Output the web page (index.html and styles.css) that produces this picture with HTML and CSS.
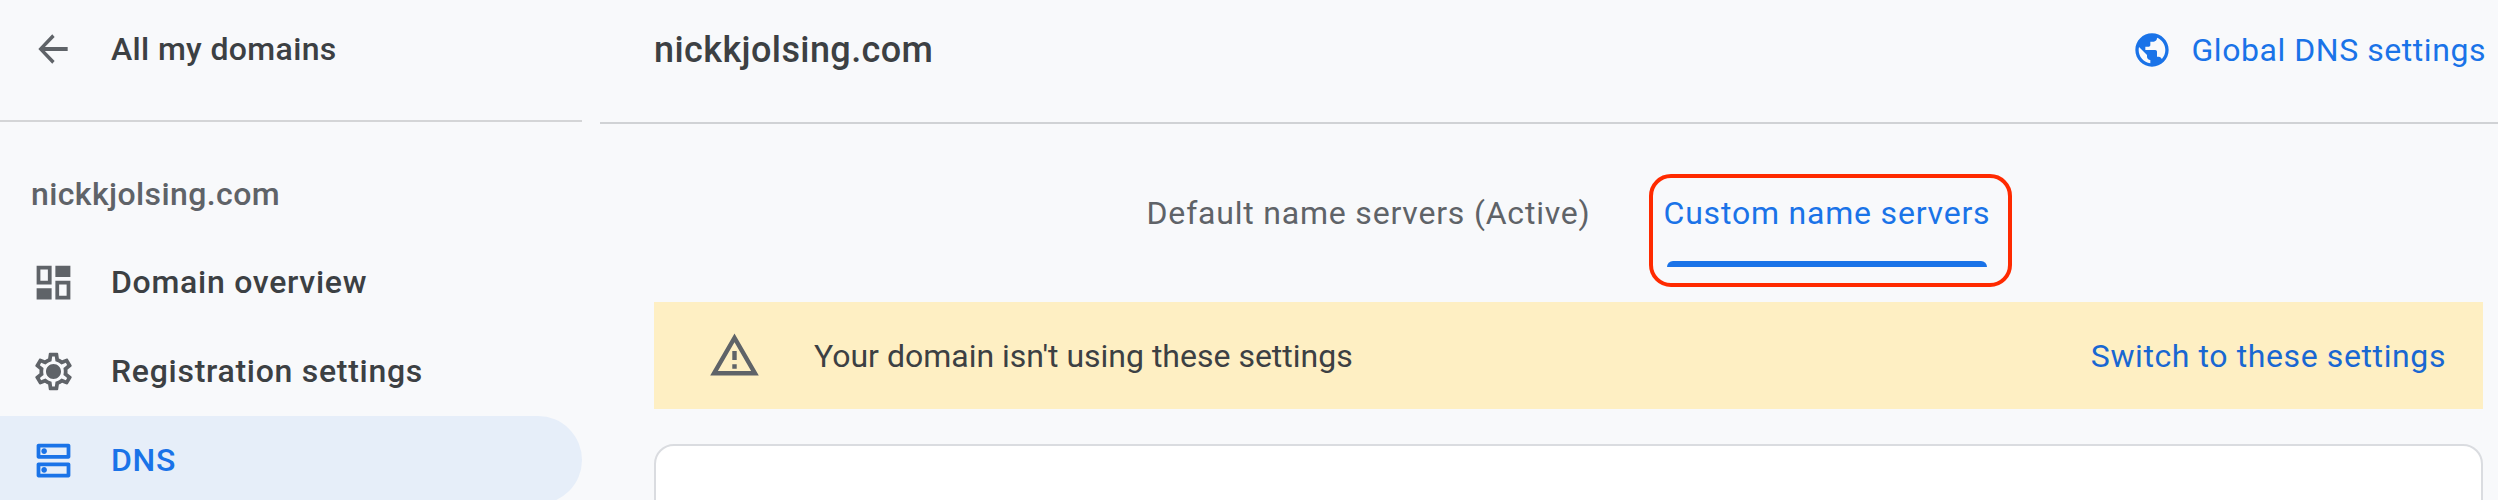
FILE: index.html
```html
<!DOCTYPE html>
<html lang="en">
<head>
<meta charset="utf-8">
<title>DNS - nickkjolsing.com</title>
<link rel="stylesheet" href="styles.css">
</head>
<body>
<div class="page">
  <aside class="sidebar">
    <div class="back">
      <svg class="icon-back" viewBox="0 0 24 24"><path d="M20 10.900H7.600l5.300-5.500-1.300-1.400L4 12l7.600 8 1.300-1.400-5.300-5.500H20z"/></svg>
      <span class="back-label">All my domains</span>
    </div>
    <div class="site-name">nickkjolsing.com</div>
    <nav class="nav">
      <a class="nav-item">
        <svg class="nav-icon" viewBox="0 0 24 24"><path fill-rule="evenodd" d="M3 3h8v10H3zM5 5v6h4V5zM13 3h8v6h-8zM3 15h8v6H3zM13 11h8v10h-8zM15 13v6h4v-6z"/></svg>
        <span>Domain overview</span>
      </a>
      <a class="nav-item">
        <svg class="nav-icon" viewBox="0 0 24 24"><path d="M19.430 12.980c.04-.32.07-.64.07-.98 0-.34-.03-.66-.07-.98l2.110-1.650c.19-.15.24-.42.12-.64l-2-3.460c-.09-.16-.26-.25-.44-.25-.06 0-.12.01-.17.03l-2.490 1c-.52-.4-1.080-.73-1.690-.98l-.38-2.650C14.460 2.180 14.250 2 14 2h-4c-.25 0-.46.18-.49.42l-.38 2.650c-.61.25-1.170.59-1.690.98l-2.490-1c-.06-.02-.12-.03-.18-.03-.17 0-.34.09-.43.25l-2 3.460c-.13.22-.07.49.12.64l2.110 1.650c-.04.32-.07.65-.07.98 0 .33.03.66.07.98l-2.110 1.650c-.19.15-.24.42-.12.64l2 3.460c.09.16.26.25.44.25.06 0 .12-.01.17-.03l2.490-1c.52.4 1.080.73 1.690.98l.38 2.650c.03.24.24.42.49.42h4c.25 0 .46-.18.49-.42l.38-2.650c.61-.25 1.170-.59 1.690-.98l2.490 1c.06.02.12.03.18.03.17 0 .34-.09.43-.25l2-3.460c.12-.22.07-.49-.12-.64l-2.110-1.650zm-1.980-1.710c.04.31.05.52.05.73 0 .21-.02.43-.05.73l-.14 1.130.89.7 1.080.84-.7 1.210-1.270-.51-1.040-.42-.9.68c-.43.32-.84.56-1.250.73l-1.060.43-.16 1.130-.2 1.350h-1.400l-.19-1.350-.16-1.130-1.060-.43c-.43-.18-.83-.41-1.230-.71l-.91-.7-1.060.43-1.270.51-.7-1.210 1.080-.84.89-.7-.14-1.130c-.03-.31-.05-.54-.05-.74s.02-.43.05-.73l.14-1.130-.89-.7-1.080-.84.7-1.210 1.270.51 1.040.42.9-.68c.43-.32.84-.56 1.250-.73l1.060-.43.16-1.130.2-1.350h1.390l.19 1.350.16 1.130 1.060.43c.43.18.83.41 1.230.71l.91.7 1.060-.43 1.270-.51.7 1.210-1.070.85-.89.7.14 1.130zM12 8c-2.210 0-4 1.790-4 4s1.790 4 4 4 4-1.790 4-4-1.790-4-4-4z"/></svg>
        <span>Registration settings</span>
      </a>
      <a class="nav-item is-active">
        <svg class="nav-icon" viewBox="0 0 24 24"><path d="M19 15v4H5v-4h14m1-2H4c-.55 0-1 .45-1 1v6c0 .55.45 1 1 1h16c.55 0 1-.45 1-1v-6c0-.55-.45-1-1-1zM7 18.500c-.82 0-1.500-.67-1.500-1.500s.68-1.500 1.500-1.500 1.500.67 1.500 1.500-.67 1.500-1.500 1.500zM19 5v4H5V5h14m1-2H4c-.55 0-1 .45-1 1v6c0 .55.45 1 1 1h16c.55 0 1-.45 1-1V4c0-.55-.45-1-1-1zM7 8.500c-.82 0-1.500-.67-1.500-1.500S6.180 5.500 7 5.500s1.500.68 1.500 1.500S7.830 8.500 7 8.500z"/></svg>
        <span>DNS</span>
      </a>
    </nav>
  </aside>
  <main class="main">
    <header class="topbar">
      <h1 class="title">nickkjolsing.com</h1>
      <a class="global-link">
        <svg class="globe" viewBox="0 0 24 24"><path d="M12 2C6.480 2 2 6.480 2 12s4.480 10 10 10 10-4.480 10-10S17.520 2 12 2zm-1 17.930c-3.950-.49-7-3.850-7-7.930 0-.62.08-1.210.21-1.790L9 15v1c0 1.100.9 2 2 2v1.930zm6.900-2.540c-.26-.81-1-1.390-1.900-1.390h-1v-3c0-.55-.45-1-1-1H8v-2h2c.55 0 1-.45 1-1V7h2c1.100 0 2-.9 2-2v-.41c2.930 1.190 5 4.060 5 7.410 0 2.080-.8 3.970-2.100 5.390z"/></svg>
        <span>Global DNS settings</span>
      </a>
    </header>
    <div class="content">
      <div class="tabs">
        <div class="tab">Default name servers (Active)</div>
        <div class="tab is-selected">Custom name servers<span class="tab-bar"></span><span class="callout"></span></div>
      </div>
      <div class="banner">
        <svg class="warn" viewBox="0 0 24 24"><path d="M12 5.990L19.530 19H4.470L12 5.990M12 2L1 21h22L12 2zm1 14h-2v2h2v-2zm0-6h-2v4h2v-4z"/></svg>
        <span class="banner-text">Your domain isn't using these settings</span>
        <a class="banner-action">Switch to these settings</a>
      </div>
      <div class="card"></div>
    </div>
  </main>
</div>
</body>
</html>
```
FILE: styles.css
```css
* { box-sizing: border-box; }
html, body { margin: 0; height: 500px; overflow: hidden; }
body { background: #f8f9fb; font-family: "Roboto", "Liberation Sans", sans-serif; color: #3c4043; }
.page { display: flex; height: 500px; overflow: hidden; }

.sidebar { width: 582px; margin-right: 18px; flex: none; }
.back { height: 122px; border-bottom: 2px solid #d4d5d7; display: flex; align-items: center; padding: 0 0 22px 31px; }
.icon-back { width: 44px; height: 44px; fill: #5f6368; flex: none; }
.back-label { margin-left: 36px; font-size: 32px; font-weight: 500; letter-spacing: .35px; line-height: 40px; }
.site-name { height: 116px; padding: 52px 0 0 31px; font-size: 32px; font-weight: 500; letter-spacing: .4px; line-height: 40px; color: #5f6368; }

.nav { display: flex; flex-direction: column; gap: 1px; }
.nav-item { height: 88px; display: flex; align-items: center; padding-left: 31px; gap: 35px; font-size: 32px; font-weight: 500; letter-spacing: .72px; color: #3c4043; border-radius: 0 44px 44px 0; }
.nav-icon { width: 45px; height: 45px; fill: #5f6368; flex: none; }
.nav-item.is-active { background: #e6eef9; color: #1a73e8; }
.nav-item.is-active .nav-icon { fill: #1a73e8; }

.main { flex: 1; min-width: 0; }
.topbar { height: 124px; border-bottom: 2px solid #d0d2d5; display: flex; align-items: center; justify-content: space-between; padding: 0 12px 22px 54px; }
.title { margin: 0; font-size: 36px; font-weight: 500; letter-spacing: .4px; line-height: 44px; color: #3c4043; }
.global-link { display: flex; align-items: center; gap: 20px; font-size: 32px; font-weight: 400; letter-spacing: .55px; color: #1a73e8; }
.globe { width: 40px; height: 40px; fill: #1a73e8; flex: none; }

.content { padding: 0 15px 0 54px; }
.tabs { height: 178px; display: flex; justify-content: center; gap: 73px; padding-top: 69px; }
.tab { position: relative; font-size: 32px; letter-spacing: .8px; line-height: 40px; height: 40px; color: #5f6368; font-weight: 400; }
.tab.is-selected { color: #1a73e8; }
.tab-bar { position: absolute; left: 3px; right: 3px; top: 68px; height: 6px; background: #1a73e8; border-radius: 6px 6px 0 0; }
.callout { position: absolute; left: -15px; right: -22px; top: -19px; height: 113px; border: 4px solid #ff2a00; border-radius: 22px; }

.banner { height: 107px; background: #feefc3; display: flex; align-items: center; padding: 0 37px 0 54px; }
.warn { width: 53px; height: 53px; fill: #5f6368; flex: none; }
.banner-text { margin-left: 53px; font-size: 32px; color: #3c4043; flex: 1; }
.banner-action { font-size: 32px; font-weight: 400; letter-spacing: .6px; color: #1967d2; }

.card { margin-top: 35px; height: 300px; background: #fff; border: 2px solid #dadce0; border-radius: 20px; }
```
